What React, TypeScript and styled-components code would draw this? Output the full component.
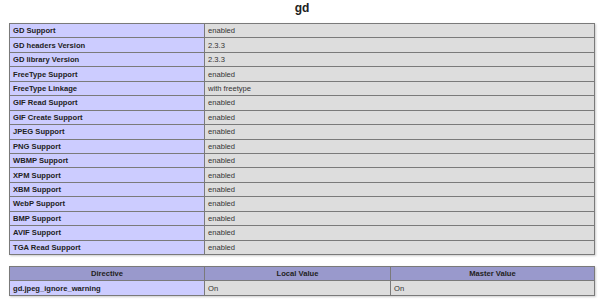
import React from "react";
import styled, { createGlobalStyle } from "styled-components";

const Global = createGlobalStyle`
  html, body { margin: 0; padding: 0; background: #fff; }
  body { font-family: "Liberation Sans", Arial, sans-serif; color: #222; }
`;

const Page = styled.div`
  width: 602px;
  height: 300px;
  overflow: hidden;
  display: flex;
  flex-direction: column;
  align-items: flex-start;
`;

const Title = styled.h2`
  margin: 0;
  width: 602px;
  height: 23px;
  font-size: 12px;
  font-weight: bold;
  line-height: 16px;
  text-align: center;
  padding-left: 2px;
  box-sizing: border-box;
  color: #222;
`;

const Table = styled.table<{ $gap?: number }>`
  border-collapse: collapse;
  width: 586px;
  margin-left: 9px;
  margin-top: ${(p) => p.$gap ?? 0}px;
  box-shadow: 1px 1px 2px #ccc;
  table-layout: fixed;
`;

const Row = styled.tr`
  height: 14.44px;
`;

const Cell = styled.td<{ $kind: "e" | "v" }>`
  border: 1px solid #7a7a7a;
  padding: 0 3px;
  font-size: 7.6px;
  line-height: 9px;
  vertical-align: middle;
  white-space: nowrap;
  background: ${(p) => (p.$kind === "e" ? "#ccccff" : "#dddddd")};
  font-weight: ${(p) => (p.$kind === "e" ? "bold" : "normal")};
  color: ${(p) => (p.$kind === "e" ? "#222" : "#333")};
`;

const Head = styled.th`
  border: 1px solid #7a7a7a;
  padding: 0 3px;
  font-size: 7.6px;
  line-height: 9px;
  vertical-align: middle;
  background: #9999cc;
  font-weight: bold;
  color: #222;
  text-align: center;
`;

const rows: [string, string][] = [
  ["GD Support", "enabled"],
  ["GD headers Version", "2.3.3"],
  ["GD library Version", "2.3.3"],
  ["FreeType Support", "enabled"],
  ["FreeType Linkage", "with freetype"],
  ["GIF Read Support", "enabled"],
  ["GIF Create Support", "enabled"],
  ["JPEG Support", "enabled"],
  ["PNG Support", "enabled"],
  ["WBMP Support", "enabled"],
  ["XPM Support", "enabled"],
  ["XBM Support", "enabled"],
  ["WebP Support", "enabled"],
  ["BMP Support", "enabled"],
  ["AVIF Support", "enabled"],
  ["TGA Read Support", "enabled"],
];

export default function App() {
  return (
    <Page>
      <Global />
      <Title>gd</Title>
      <Table>
        <colgroup>
          <col style={{ width: 195 }} />
          <col />
        </colgroup>
        <tbody>
          {rows.map(([k, v]) => (
            <Row key={k}>
              <Cell $kind="e">{k}</Cell>
              <Cell $kind="v">{v}</Cell>
            </Row>
          ))}
        </tbody>
      </Table>
      <Table $gap={11}>
        <colgroup>
          <col style={{ width: 195 }} />
          <col style={{ width: 186 }} />
          <col />
        </colgroup>
        <tbody>
          <Row>
            <Head>Directive</Head>
            <Head>Local Value</Head>
            <Head>Master Value</Head>
          </Row>
          <Row>
            <Cell $kind="e">gd.jpeg_ignore_warning</Cell>
            <Cell $kind="v">On</Cell>
            <Cell $kind="v">On</Cell>
          </Row>
        </tbody>
      </Table>
    </Page>
  );
}
